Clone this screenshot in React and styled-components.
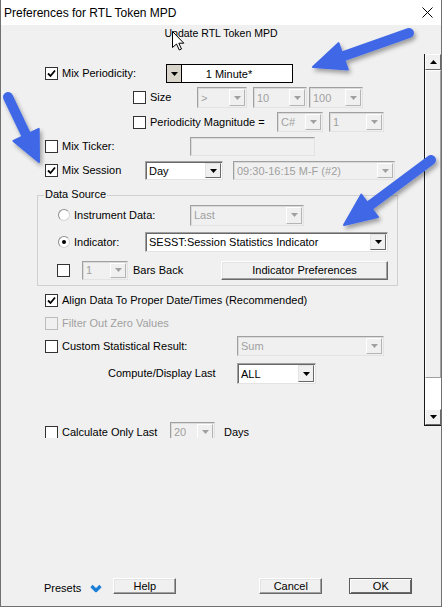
import React from 'react'
import styled, { createGlobalStyle } from 'styled-components'

const GlobalStyle = createGlobalStyle`
    html, body {
        margin: 0;
        padding: 0;
        background: #f0f0f0;
    }
    body {
        font-family: "Liberation Sans", Arial, sans-serif;
        font-size: 11px;
        color: #000;
    }
    * {
        box-sizing: border-box;
    }
`

const Window = styled.div`
    position: relative;
    width: 442px;
    height: 607px;
    background: #f0f0f0;
    border: 1px solid #707070;
    border-top: none;
    display: flex;
    flex-direction: column;
    overflow: hidden;
`

const TitleBar = styled.div`
    height: 25px;
    flex-shrink: 0;
    background: #fff;
    display: flex;
    align-items: center;
    justify-content: space-between;
    padding: 0 8px 0 3px;
    font-size: 12px;
`

const Header = styled.div`
    height: 29px;
    flex-shrink: 0;
    padding-top: 2px;
    text-align: center;
    line-height: 13px;
    font-size: 10.5px;
`

const Body = styled.div`
    display: flex;
    align-items: flex-start;
    height: 384px;
    flex-shrink: 0;
`

const Pane = styled.div`
    flex: 1;
    height: 384px;
    overflow: hidden;
    padding-top: 8px;
`

const Row = styled.div`
    display: flex;
    align-items: center;
    height: ${p => p.$h}px;
    margin-top: ${p => p.$mt || 0}px;
    padding-left: ${p => p.$pl || 0}px;
`

const Label = styled.span`
    flex-shrink: 0;
    width: ${p => (p.$w ? `${p.$w}px` : 'auto')};
    margin-left: ${p => p.$ml || 0}px;
    white-space: nowrap;
    line-height: 13px;
    color: ${p => (p.$disabled ? '#a0a0a0' : '#000')};
`

const Box = styled.span`
    width: 13px;
    height: 13px;
    flex-shrink: 0;
    margin-right: ${p => (p.$mr == null ? 4 : p.$mr)}px;
    border: 1px solid ${p => (p.$disabled ? '#bcbcbc' : '#333')};
    background: ${p => (p.$disabled ? '#f0f0f0' : '#fff')};
    display: flex;
    align-items: center;
    justify-content: center;
`

const Round = styled.span`
    width: 12px;
    height: 12px;
    flex-shrink: 0;
    margin-right: 4px;
    border-radius: 50%;
    border: 1px solid;
    border-color: #8d8d8d #d4d4d4 #d4d4d4 #8d8d8d;
    background: #fff;
    display: flex;
    align-items: center;
    justify-content: center;

    &::after {
        content: '';
        display: ${p => (p.$checked ? 'block' : 'none')};
        width: 4px;
        height: 4px;
        border-radius: 50%;
        background: #000;
    }
`

const ComboBox = styled.div`
    display: flex;
    flex-shrink: 0;
    width: ${p => p.$w}px;
    height: ${p => p.$h}px;
    margin-left: ${p => p.$ml || 0}px;
    border: 1px solid;
    border-color: #a0a0a0 #e3e3e3 #e3e3e3 #a0a0a0;
    box-shadow: inset 1px 1px 0 ${p => (p.$disabled ? '#dadada' : '#696969')};
    background: ${p => (p.$disabled ? '#f0f0f0' : '#fff')};
`

const ComboText = styled.span`
    flex: 1;
    display: flex;
    align-items: center;
    padding-left: 3px;
    white-space: nowrap;
    overflow: hidden;
    color: ${p => (p.$disabled ? '#a0a0a0' : '#000')};
`

const DropBtn = styled.span`
    width: 16px;
    margin: 1px;
    flex-shrink: 0;
    background: #f0f0f0;
    border: 1px solid;
    border-color: ${p =>
        p.$disabled ? '#fff #b4b4b4 #b4b4b4 #fff' : '#e3e3e3 #696969 #696969 #e3e3e3'};
    display: flex;
    align-items: center;
    justify-content: center;
`

const PeriodField = styled.div`
    display: flex;
    flex-shrink: 0;
    width: 127px;
    height: 19px;
    border: 1px solid #000;
    background: #fff;
`

const PeriodBtn = styled.span`
    width: 15px;
    flex-shrink: 0;
    background: #d8d4ca;
    border-right: 1px solid #000;
    display: flex;
    align-items: center;
    justify-content: center;
`

const PeriodText = styled.span`
    flex: 1;
    display: flex;
    align-items: center;
    justify-content: center;
    padding-right: 16px;
`

const TextField = styled.div`
    width: ${p => p.$w}px;
    height: 19px;
    flex-shrink: 0;
    border: 1px solid;
    border-color: #a0a0a0 #e3e3e3 #e3e3e3 #a0a0a0;
    box-shadow: inset 1px 1px 0 #dadada;
    background: #f0f0f0;
`

const Group = styled.div`
    position: relative;
    width: 361px;
    margin: 12px 0 0 36px;
    padding: 7px 0 2px;
    border: 1px solid #d0d0d0;
`

const Legend = styled.span`
    position: absolute;
    top: -8px;
    left: 6px;
    padding: 0 1px;
    line-height: 13px;
    background: #f0f0f0;
`

const Button = styled.button`
    width: ${p => p.$w}px;
    height: ${p => p.$h}px;
    flex-shrink: 0;
    margin-left: ${p => p.$ml || 0}px;
    padding: 0;
    font-family: "Liberation Sans", Arial, sans-serif;
    font-size: 11px;
    color: #000;
    background: #f0f0f0;
    border: 1px solid;
    border-color: ${p => (p.$default ? '#5a5a5a' : '#fff #696969 #696969 #fff')};
    box-shadow: ${p =>
        p.$default
            ? 'inset 1px 1px 0 #fff, inset -1px -1px 0 #696969'
            : 'inset -1px -1px 0 #a0a0a0, inset 1px 1px 0 #e3e3e3'};
`

const ScrollBar = styled.div`
    width: 17px;
    height: 372px;
    flex-shrink: 0;
    border-left: 1px solid #1a1a1a;
    border-bottom: 1px solid #1a1a1a;
    display: flex;
    flex-direction: column;
`

const ScrollBtn = styled.span`
    height: 16px;
    flex-shrink: 0;
    background: #f0f0f0;
    border: 1px solid;
    border-color: #fff #696969 #696969 #fff;
    display: flex;
    align-items: center;
    justify-content: center;
`

const Thumb = styled.span`
    height: 308px;
    flex-shrink: 0;
    background: #f0f0f0;
    border: 1px solid;
    border-color: #fff #a0a0a0 #a0a0a0 #fff;
`

const Track = styled.span`
    flex: 1;
    background: #fff;
`

const Footer = styled.div`
    flex: 1;
    display: flex;
    align-items: flex-end;
    padding: 0 0 12px 43px;
`

const Presets = styled.span`
    line-height: 13px;
    margin-bottom: -1px;
`

const Chevron = styled.svg`
    margin: 0 0 1px 9px;
    flex-shrink: 0;
`

const Overlay = styled.svg`
    position: absolute;
    top: 0;
    left: 0;
    pointer-events: none;
`

const Tri = ({ color = '#000', up }) => (
    <svg width="7" height="4" viewBox="0 0 7 4">
        <polygon points={up ? '0,4 7,4 3.5,0' : '0,0 7,0 3.5,4'} fill={color} />
    </svg>
)

const Check = ({ checked, disabled, mr }) => (
    <Box $disabled={disabled} $mr={mr}>
        {checked && (
            <svg width="11" height="11" viewBox="0 0 11 11">
                <path d="M2 5.5 L4.5 8 L9 2.5" fill="none" stroke="#000" strokeWidth="1.8" />
            </svg>
        )}
    </Box>
)

const Combo = ({ w, h = 20, ml, value, disabled }) => (
    <ComboBox $w={w} $h={h} $ml={ml} $disabled={disabled}>
        <ComboText $disabled={disabled}>{value}</ComboText>
        <DropBtn $disabled={disabled}>
            <Tri color={disabled ? '#a0a0a0' : '#000'} />
        </DropBtn>
    </ComboBox>
)

const Arrow = ({ tail, tip, len = 32, half = 14 }) => {
    const dx = tip[0] - tail[0]
    const dy = tip[1] - tail[1]
    const d = Math.hypot(dx, dy)
    const ux = dx / d
    const uy = dy / d
    const bx = tip[0] - ux * len
    const by = tip[1] - uy * len
    const px = -uy * half
    const py = ux * half
    return (
        <g>
            <line x1={tail[0]} y1={tail[1]} x2={bx} y2={by} stroke="#3f68e6" strokeWidth="10" strokeLinecap="round" />
            <polygon
                points={`${tip[0]},${tip[1]} ${bx + px},${by + py} ${bx - px},${by - py}`}
                fill="#3f68e6"
                stroke="#3f68e6"
                strokeWidth="2"
                strokeLinejoin="round"
            />
        </g>
    )
}

export default function App() {
    return (
        <Window>
            <GlobalStyle />
            <TitleBar>
                <span>Preferences for RTL Token MPD</span>
                <svg width="11" height="11" viewBox="0 0 11 11">
                    <path d="M0.5 0.5 L10.5 10.5 M10.5 0.5 L0.5 10.5" stroke="#000" strokeWidth="1" />
                </svg>
            </TitleBar>
            <Header>Update RTL Token MPD</Header>
            <Body>
                <Pane>
                    <Row $h={23} $pl={44}>
                        <Check checked />
                        <Label $w={104}>Mix Periodicity:</Label>
                        <PeriodField>
                            <PeriodBtn>
                                <Tri />
                            </PeriodBtn>
                            <PeriodText>1 Minute*</PeriodText>
                        </PeriodField>
                    </Row>
                    <Row $h={25} $pl={132}>
                        <Check />
                        <Label $w={47}>Size</Label>
                        <Combo w={50} h={21} value=">" disabled />
                        <Combo w={54} h={21} ml={6} value="10" disabled />
                        <Combo w={54} h={21} ml={2} value="100" disabled />
                    </Row>
                    <Row $h={24} $pl={132}>
                        <Check />
                        <Label $w={127}>Periodicity Magnitude =</Label>
                        <Combo w={46} value="C#" disabled />
                        <Combo w={55} ml={6} value="1" disabled />
                    </Row>
                    <Row $h={24} $pl={44}>
                        <Check />
                        <Label $w={128}>Mix Ticker:</Label>
                        <TextField $w={125} />
                    </Row>
                    <Row $h={25} $pl={44}>
                        <Check checked />
                        <Label $w={83}>Mix Session</Label>
                        <Combo w={78} h={19} value="Day" />
                        <Combo w={162} h={19} ml={10} value="09:30-16:15 M-F (#2)" disabled />
                    </Row>
                    <Group>
                        <Legend>Data Source</Legend>
                        <Row $h={24} $pl={20}>
                            <Round />
                            <Label $w={116}>Instrument Data:</Label>
                            <Combo w={114} h={21} value="Last" disabled />
                        </Row>
                        <Row $h={30} $pl={20}>
                            <Round $checked />
                            <Label $w={71}>Indicator:</Label>
                            <Combo w={243} value="SESST:Session Statistics Indicator" />
                        </Row>
                        <Row $h={26} $pl={19}>
                            <Check mr={12} />
                            <Combo w={46} h={19} value="1" disabled />
                            <Label $w={88} $ml={5}>Bars Back</Label>
                            <Button $w={167} $h={19}>Indicator Preferences</Button>
                        </Row>
                    </Group>
                    <Row $h={24} $mt={2} $pl={44}>
                        <Check checked />
                        <Label>Align Data To Proper Date/Times (Recommended)</Label>
                    </Row>
                    <Row $h={23} $pl={44}>
                        <Check disabled />
                        <Label $disabled>Filter Out Zero Values</Label>
                    </Row>
                    <Row $h={22} $pl={44}>
                        <Check />
                        <Label $w={175}>Custom Statistical Result:</Label>
                        <Combo w={147} value="Sum" disabled />
                    </Row>
                    <Row $h={33} $pl={107}>
                        <Label $w={129}>Compute/Display Last</Label>
                        <Combo w={79} h={21} value="ALL" />
                    </Row>
                    <Row $h={24} $mt={30} $pl={44}>
                        <Check />
                        <Label $w={108}>Calculate Only Last</Label>
                        <Combo w={45} value="20" disabled />
                        <Label $ml={9}>Days</Label>
                    </Row>
                </Pane>
                <ScrollBar>
                    <ScrollBtn>
                        <Tri up />
                    </ScrollBtn>
                    <Thumb />
                    <Track />
                    <ScrollBtn>
                        <Tri />
                    </ScrollBtn>
                </ScrollBar>
            </Body>
            <Footer>
                <Presets>Presets</Presets>
                <Chevron width="12" height="9" viewBox="0 0 12 9">
                    <path d="M1.5 2 L6 6.5 L10.5 2" fill="none" stroke="#1b7fd6" strokeWidth="3.2" strokeLinejoin="round" />
                </Chevron>
                <Button $w={63} $h={16} $ml={11}>Help</Button>
                <Button $w={63} $h={16} $ml={83}>Cancel</Button>
                <Button $w={63} $h={16} $ml={27} $default>OK</Button>
            </Footer>
            <Overlay width="442" height="607" viewBox="0 0 442 607">
                <defs>
                    <filter id="shadow" x="-20%" y="-20%" width="140%" height="140%">
                        <feDropShadow dx="2" dy="3" stdDeviation="2" floodColor="#000" floodOpacity="0.35" />
                    </filter>
                </defs>
                <g filter="url(#shadow)">
                    <Arrow tail={[408, 33]} tip={[312, 67]} />
                    <Arrow tail={[7, 97]} tip={[38, 162]} len={30} />
                    <Arrow tail={[430, 160]} tip={[343, 225]} />
                </g>
                <path
                    d="M0 0 V16 L4 12.5 L6.8 18.5 L9 17.5 L6.3 11.7 H11.3 Z"
                    transform="translate(171.5 31.5)"
                    fill="#fff"
                    stroke="#000"
                    strokeWidth="1"
                    strokeLinejoin="round"
                />
            </Overlay>
        </Window>
    )
}
